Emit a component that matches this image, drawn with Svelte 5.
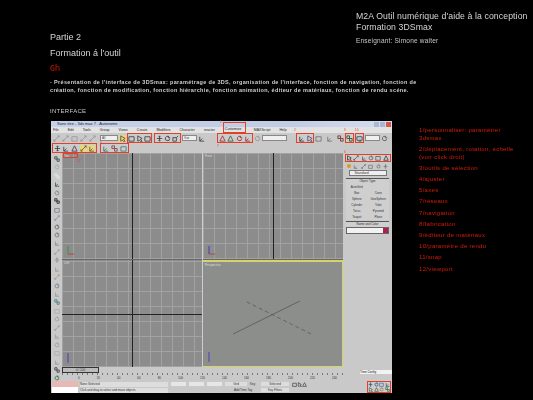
<script>
    const notes = [
        ["1/personnaliser: paramétrer", "3dsmax"],
        ["2/déplacement, rotation, échelle", "(voir click droit)"],
        ["3/outils de sélection"],
        ["4/ajuster"],
        ["5/axes"],
        ["7/réseaux"],
        ["7/navigation"],
        ["8/fabrication"],
        ["9/éditeur de matériaux"],
        ["10/paramètre de rendu"],
        ["11/snap"],
        ["12/viewport"]
    ];

    const paths = {
        link: "M1 7 7 1M5 1h2v2M1 5v2h2",
        arrow: "M2 1v6l2-1 2 2 1-1-2-2 2-1z",
        box: "M1 2h6v5H1z",
        move: "M4 1v6M1 4h6M3 2l1-1 1 1M3 6l1 1 1-1",
        rot: "M6.500 4a2.500 2.500 0 1 1-1-2M5 1v2h2",
        scale: "M1 7V3h4v4zM5 3l2-2",
        axis: "M2 7V2M2 7h5M2 7l3-3",
        tri: "M4 1 7 7H1z",
        mat: "M1 1h3v3H1zM4 4h3v3H4z",
        rend: "M1 2h6v4H1zM3 7h3"
    };

    const panelRows = [
        ["AutoGrid", ""],
        ["Box", "Cone"],
        ["Sphere", "GeoSphere"],
        ["Cylinder", "Tube"],
        ["Torus", "Pyramid"],
        ["Teapot", "Plane"]
    ];
    const menus = ["File", "Edit", "Tools", "Group", "Views", "Create", "Modifiers", "Character", "reactor"];
    const ticks = Array.from({ length: 13 }, (_, i) => i * 20);

    // left command strip of the max window, shape and colour
    const sideIcons = [
        ["mat", "#2c3c3c"], ["rot", "#8fb0b0"], ["mat", "#e4eeee"], ["axis", "#3c4c4c"], ["rot", "#6c8080"],
        ["mat", "#111"], ["box", "#778"], ["link", "#889"], ["rot", "#4c5c5c"], ["rot", "#667"],
        ["axis", "#888"], ["link", "#999"], ["move", "#888"], ["axis", "#999"], ["link", "#999"],
        ["rot", "#678"], ["axis", "#999"], ["mat", "#3a7a7a"], ["box", "#aaa"], ["rot", "#999"],
        ["link", "#999"], ["axis", "#999"], ["rot", "#999"], ["box", "#aaa"], ["axis", "#999"],
        ["mat", "#333"], ["rot", "#2a6a3a"]
    ];

    // little red numbers beside the boxes, in window coordinates
    const marks = [
        { t: "1", x: 169, y: 0 },
        { t: "2", x: 243, y: 8 },
        { t: "9", x: 293, y: 8 },
        { t: "10", x: 304, y: 8 },
        { t: "5", x: 49, y: 20 },
        { t: "7", x: 166, y: 24 },
        { t: "12", x: 26, y: 39 },
        { t: "6", x: 293, y: 30 }
    ];
</script>

{#snippet icon(name, color = "#444")}
    <svg class="ic" viewBox="0 0 8 8" fill="none" stroke={color} stroke-width="1"><path d={paths[name]} /></svg>
{/snippet}

{#snippet viewport(kind, label)}
    <div class="vp {kind}">
        <span class="vlabel">{label}</span>
        {#if kind === "v-persp"}
            <svg class="ground" viewBox="0 0 141 107" fill="none">
                <path d="M30 74 99 40" stroke="#4c4c4c" stroke-width=".7" />
                <path d="M44 41 110 74" stroke="#4c4c4c" stroke-width=".7" stroke-dasharray="4 3" />
            </svg>
        {:else}
            <i class="cross-v"></i>
            {#if kind === "v-left"}<i class="cross-h"></i>{/if}
        {/if}
        <svg class="gizmo" viewBox="0 0 12 12" fill="none">
            {#if kind === "v-top"}
                <path d="M3 2v8" stroke="#3a9a4a" stroke-width="1.200" />
                <path d="M3 10h6" stroke="#b44" stroke-width="1" />
            {:else if kind === "v-front"}
                <path d="M3 2v8" stroke="#4848b8" stroke-width="1.200" />
                <path d="M3 10h6" stroke="#b44" stroke-width="1" />
            {:else}
                <path d="M3 1v10" stroke="#5050b0" stroke-width="1.200" />
                <path d="M3 11 7 8" stroke="#a77" stroke-width=".7" />
            {/if}
        </svg>
    </div>
{/snippet}

<div class="slide">
    <header class="top">
        <div class="part">
            <p>Partie 2</p>
            <p>Formation á l'outil</p>
            <p class="hours">6h</p>
        </div>
        <div class="course">
            <p>M2A Outil numérique d'aide à la conception</p>
            <p>Formation 3DSmax</p>
            <p class="teacher">Enseignant: Simone walter</p>
        </div>
    </header>

    <p class="desc">- Présentation de l'interface de 3DSmax: paramétrage de 3DS, organisation de l'interface, fonction de navigation, fonction de création, fonction de modification, fonction hiérarchie, fonction animation, éditeur de matériaux, fonction de rendu scéne.</p>
    <p class="heading">INTERFACE</p>

    <div class="content">
        <div class="max">
            <div class="titlebar">
                <span>Sans titre - 3ds max 7 - Autonome</span>
                <span class="winbtns"><i></i><i></i><i class="close"></i></span>
            </div>
            <div class="menubar">
                {#each menus as m}<span>{m}</span>{/each}
                <span class="menu-hl">Customize</span>
                <span>MAXScript</span>
                <span>Help</span>
            </div>

            <div class="tb tb1">
                <span class="ghost">{@render icon("link", "#999")}{@render icon("link", "#999")}{@render icon("box", "#999")}{@render icon("link", "#999")}{@render icon("link", "#999")}</span>
                <span class="drop w18">All</span>
                <span class="yellow">{@render icon("arrow", "#555")}</span>
                <span class="hl g25">{@render icon("box")}{@render icon("arrow")}{@render icon("box")}</span>
                <span class="hl g26">{@render icon("move")}{@render icon("rot")}{@render icon("scale")}</span>
                <span class="drop w15">Vue</span>
                {@render icon("axis")}
                <span class="hl g36">{@render icon("tri", "#a33")}{@render icon("tri", "#464")}{@render icon("rot", "#a33")}{@render icon("axis", "#a33")}</span>
                {@render icon("rot", "#999")}
                <span class="drop w25"></span>
                <span class="hl g18">{@render icon("axis")}{@render icon("arrow", "#557")}</span>
                {@render icon("box", "#777")}<span class="pad"></span>{@render icon("axis", "#777")}<span class="pad"></span>{@render icon("mat", "#733")}
                <span class="hl one">{@render icon("mat", "#353")}</span>
                <span class="hl one">{@render icon("rend", "#355")}</span>
                <span class="drop w15"></span>
                {@render icon("rot", "#566")}
            </div>

            <div class="tb tb2">
                <span class="hl g45">
                    {@render icon("move")}{@render icon("axis")}{@render icon("tri")}
                    <span class="yellow">{@render icon("link", "#755")}</span><span class="yellow">{@render icon("axis", "#755")}</span>
                </span>
                <span class="hl g29">{@render icon("axis", "#477")}{@render icon("mat", "#844")}{@render icon("box", "#577")}</span>
            </div>

            <div class="main">
                <div class="leftcol">
                    <aside class="side">
                        {#each sideIcons as s}{@render icon(s[0], s[1])}{/each}
                    </aside>
                    <div class="centre">
                        <div class="views">
                            <span class="vp-box"></span>
                            {@render viewport("v-top", "Top")}
                            {@render viewport("v-front", "Front")}
                            {@render viewport("v-left", "Left")}
                            {@render viewport("v-persp", "Perspective")}
                        </div>
                        <div class="slider"><span class="thumb">0 / 100</span></div>
                        <div class="ruler">
                            {#each ticks as t}<span>{t}</span>{/each}
                        </div>
                    </div>
                </div>

                <aside class="panel">
                    <div class="hl tabs">
                        {@render icon("arrow", "#333")}{@render icon("link", "#555")}{@render icon("axis", "#555")}{@render icon("rot", "#555")}{@render icon("box", "#555")}{@render icon("tri", "#333")}
                    </div>
                    <div class="sub">
                        <i class="dot"></i>
                        {@render icon("axis", "#666")}{@render icon("link", "#666")}{@render icon("box", "#666")}{@render icon("rot", "#666")}{@render icon("move", "#666")}
                    </div>
                    <div class="std">Standard</div>
                    <div class="rollout">
                        <b>Object Type</b>
                        {#each panelRows as row}
                            <div class="prow"><span>{row[0]}</span><span>{row[1]}</span></div>
                        {/each}
                    </div>
                    <div class="rollout name">
                        <b>Name and Color</b>
                        <div class="field"><i></i></div>
                    </div>
                    <div class="spacer"></div>
                    <div class="timecfg">Time Config</div>
                </aside>
            </div>

            <div class="bottom">
                <div class="listener"><i></i><i></i></div>
                <div class="status">
                    <div class="st1">
                        <span class="line">None Selected</span>
                        <span class="fld"></span><span class="fld"></span><span class="fld"></span>
                        <span class="btn">Grid</span>
                        <span class="key">Key</span>
                        <span class="btn w">Selected</span>
                        <span class="play">{@render icon("box", "#333")}{@render icon("arrow", "#333")}{@render icon("tri", "#333")}</span>
                    </div>
                    <div class="st2">
                        <span class="line">Click and drag to select and move objects</span>
                        <span class="addt">Add Time Tag</span>
                        <span class="btn w">Key Filters</span>
                    </div>
                </div>
                <div class="hl navi">
                    {@render icon("move", "#345")}{@render icon("rot", "#345")}{@render icon("box", "#36a")}{@render icon("axis", "#345")}
                    {@render icon("arrow", "#454")}{@render icon("tri", "#454")}{@render icon("rot", "#a63")}{@render icon("mat", "#454")}
                </div>
            </div>

            {#each marks as m}
                <span class="mark" style="left:{m.x}px;top:{m.y}px">{m.t}</span>
            {/each}
        </div>

        <ul class="notes">
            {#each notes as n}
                <li>{#each n as line}<span>{line}</span>{/each}</li>
            {/each}
        </ul>
    </div>
</div>

<style>
    :global(body) {
        margin: 0;
        background: #000;
    }

    p {
        margin: 0;
    }

    .slide {
        width: 533px;
        height: 400px;
        box-sizing: border-box;
        padding: 1px 0 0 50px;
        background: #000;
        color: #d6d6d6;
        font-family: "Liberation Sans", Arial, sans-serif;
        overflow: hidden;
    }

    .top {
        display: flex;
        height: 77px;
    }

    .part {
        width: 306px;
        flex: none;
        padding-top: 29px;
        font-size: 9px;
        line-height: 15.500px;
        filter: blur(.3px);
    }

    .hours {
        color: #c01808;
    }

    .course {
        padding-top: 10px;
        font-size: 8.700px;
        line-height: 11px;
        letter-spacing: .1px;
        filter: blur(.3px);
        white-space: nowrap;
    }

    .teacher {
        margin-top: 2px;
        font-size: 6.500px;
        letter-spacing: .2px;
        color: #c8c8c8;
    }

    .desc {
        width: 372px;
        font-size: 5.500px;
        font-weight: bold;
        line-height: 8px;
        letter-spacing: .33px;
        color: #cfcfcf;
        filter: blur(.3px);
    }

    .heading {
        margin-top: 13px;
        height: 14px;
        font-size: 6px;
        line-height: 8px;
        letter-spacing: .3px;
        color: #c8c8c8;
        filter: blur(.2px);
    }

    .content {
        display: flex;
        align-items: flex-start;
        margin-left: 1px;
    }

    .max {
        position: relative;
        width: 341px;
        height: 272px;
        flex: none;
        display: flex;
        flex-direction: column;
        background: #c9c9c9;
        color: #333;
        font-size: 3.500px;
        filter: blur(.55px);
    }

    .mark {
        position: absolute;
        font-size: 3px;
        line-height: 3px;
        color: #e2402a;
    }

    .titlebar {
        height: 6px;
        display: flex;
        justify-content: space-between;
        align-items: center;
        padding: 0 1px 0 6px;
        background: linear-gradient(90deg, #c6d2ea, #c0cbe4 70%, #d6def0);
        color: #223;
        line-height: 6px;
        font-size: 4px;
    }

    .winbtns {
        display: flex;
        gap: 1px;
    }

    .winbtns i {
        width: 5px;
        height: 5px;
        background: #a9b6d6;
    }

    .winbtns .close {
        background: #d65a4a;
    }

    .menubar {
        position: relative;
        height: 6px;
        display: flex;
        gap: 9px;
        padding-left: 2px;
        background: #e2e2e2;
        color: #222;
        line-height: 6px;
        white-space: nowrap;
    }

    .menu-hl {
        outline: 1px solid #e0432a;
        height: 9px;
        margin-top: -4px;
        padding: 3px 1px 0;
        box-sizing: border-box;
        width: 21px;
    }

    .tb {
        display: flex;
        align-items: center;
        background: #c9c9c9;
    }

    .tb1 {
        height: 10px;
        padding-left: 2px;
        gap: 1px;
    }

    .tb2 {
        height: 10px;
        padding-left: 1px;
        gap: 3px;
    }

    .ghost {
        display: flex;
        gap: 2px;
        width: 46px;
    }

    .ic {
        width: 7px;
        height: 7px;
        flex: none;
    }

    .pad {
        width: 2px;
    }

    .hl {
        box-sizing: border-box;
        display: flex;
        align-items: center;
        justify-content: space-around;
        border: 1px solid #e2402a;
        background: #ccc;
    }

    .tb .hl {
        height: 10px;
    }

    .g25 { width: 25px; }
    .g26 { width: 27px; margin-left: 1px; }
    .g36 { width: 36px; margin-left: 11px; }
    .g18 { width: 18px; margin-left: 8px; }
    .g45 { width: 45px; }
    .g29 { width: 29px; }
    .one { width: 9px; }

    .yellow {
        display: flex;
        background: #e9d774;
    }

    .drop {
        box-sizing: border-box;
        height: 6px;
        flex: none;
        padding-left: 1px;
        background: #efefef;
        border: 1px solid #888;
        line-height: 4px;
        font-size: 3px;
    }

    .w18 { width: 18px; }
    .w15 { width: 15px; }
    .w25 { width: 25px; }

    .main {
        display: flex;
        height: 228px;
    }

    .leftcol {
        width: 292px;
        display: flex;
    }

    .side {
        width: 11px;
        flex: none;
        padding-top: 3px;
        display: flex;
        flex-direction: column;
        align-items: center;
        gap: 2.450px;
        background: #c9c9c9;
    }

    .side .ic {
        width: 6px;
        height: 6px;
    }

    .centre {
        width: 281px;
    }

    .views {
        position: relative;
        height: 214px;
        display: grid;
        grid-template-columns: 1fr 1fr;
        grid-template-rows: 1fr 1fr;
        background: #cfcfcf;
        column-gap: 1px;
    }

    .vp-box {
        position: absolute;
        z-index: 2;
        left: 1px;
        top: 0;
        width: 15px;
        height: 5px;
        box-sizing: border-box;
        border: 1px solid #e2402a;
    }

    .vp {
        position: relative;
        box-sizing: border-box;
        background-color: #8c8c8c;
        background-image:
            repeating-linear-gradient(90deg, #a2a2a2 0 1px, transparent 1px 11px),
            repeating-linear-gradient(0deg, #a2a2a2 0 1px, transparent 1px 15px);
    }

    .vp.v-top,
    .vp.v-front {
        border-bottom: 1px solid #666;
    }

    .vp.v-persp {
        border: 1px solid #d6d468;
        border-width: 2px 1px 1px 0;
        background-image: none;
        background-color: #8c8e8c;
    }

    .vlabel {
        position: absolute;
        left: 2px;
        top: 1px;
        font-size: 3px;
        color: #ddd;
    }

    .cross-v,
    .cross-h {
        position: absolute;
        background: #222;
    }

    .cross-v {
        left: 50%;
        top: 0;
        bottom: 0;
        width: 1px;
    }

    .cross-h {
        top: 50%;
        left: 0;
        right: 0;
        height: 1px;
    }

    .ground {
        position: absolute;
        inset: 0;
        width: 100%;
        height: 100%;
    }

    .gizmo {
        position: absolute;
        left: 3px;
        bottom: 3px;
        width: 12px;
        height: 12px;
    }

    .slider {
        height: 6px;
        background: #c9c9c9;
    }

    .thumb {
        display: block;
        box-sizing: border-box;
        width: 37px;
        height: 6px;
        border: 1px solid #333;
        background: #bbb;
        text-align: center;
        line-height: 4px;
        font-size: 3px;
    }

    .ruler {
        height: 8px;
        display: flex;
        justify-content: space-between;
        padding: 0 6px 0 16px;
        background: repeating-linear-gradient(90deg, #777 0 1px, transparent 1px 5px) 0 0 / 100% 2px no-repeat #c9c9c9;
        line-height: 11px;
        font-size: 3px;
    }

    .panel {
        width: 49px;
        display: flex;
        flex-direction: column;
        align-items: center;
        background: #c9c9c9;
    }

    .tabs {
        width: 46px;
        height: 8px;
        margin-top: 1px;
    }

    .sub {
        display: flex;
        align-items: center;
        justify-content: space-around;
        width: 44px;
        height: 8px;
    }

    .sub .ic {
        width: 5px;
        height: 5px;
    }

    .tabs .ic {
        width: 6px;
        height: 6px;
    }

    .dot {
        width: 4px;
        height: 4px;
        border-radius: 50%;
        background: #dc9a20;
    }

    .std {
        box-sizing: border-box;
        width: 38px;
        height: 6px;
        padding-left: 5px;
        border: 1px solid #777;
        background: #eee;
        line-height: 4px;
        font-size: 3.500px;
    }

    .rollout {
        box-sizing: border-box;
        width: 43px;
        margin-top: 2px;
        border-top: 1px solid #555;
        background: #cfcfcf;
    }

    .rollout b {
        display: block;
        height: 5px;
        text-align: center;
        line-height: 4px;
        font-weight: normal;
        font-size: 3px;
    }

    .prow {
        display: grid;
        grid-template-columns: 1fr 1fr;
        height: 6px;
        text-align: center;
        line-height: 6px;
        font-size: 3px;
        white-space: nowrap;
    }

    .name {
        margin-top: 1px;
    }

    .field {
        display: flex;
        justify-content: flex-end;
        height: 7px;
        background: #f2f2f2;
        border: 1px solid #666;
        box-sizing: border-box;
    }

    .field i {
        width: 5px;
        background: #a8224c;
    }

    .spacer {
        flex: 1;
    }

    .timecfg {
        margin-bottom: 7px;
        align-self: flex-end;
        width: 32px;
        height: 4px;
        background: #f2f2f2;
        color: #111;
        line-height: 4px;
        font-size: 3px;
        white-space: nowrap;
    }

    .bottom {
        display: flex;
        height: 12px;
        background: #c9c9c9;
    }

    .listener {
        width: 26px;
        margin-left: 1px;
        flex: none;
    }

    .listener i {
        display: block;
        height: 6px;
        background: #e8b8b4;
    }

    .listener i + i {
        background: #fff;
    }

    .status {
        width: 289px;
        flex: none;
        padding-left: 2px;
        box-sizing: border-box;
    }

    .st1,
    .st2 {
        display: flex;
        align-items: center;
        gap: 3px;
        height: 6px;
        white-space: nowrap;
        font-size: 3px;
    }

    .line {
        width: 88px;
        flex: none;
        background: #ddd;
        line-height: 5px;
    }

    .fld {
        width: 15px;
        height: 4px;
        background: #e6e6e6;
    }

    .btn {
        width: 22px;
        background: #ddd;
        text-align: center;
    }

    .btn.w {
        width: 28px;
    }

    .key {
        width: 8px;
    }

    .play {
        display: flex;
    }

    .play .ic {
        width: 5px;
        height: 5px;
    }

    .addt {
        width: 24px;
        margin-left: 63px;
    }

    .navi {
        width: 24px;
        height: 12px;
        flex-wrap: wrap;
    }

    .navi .ic {
        width: 5px;
        height: 5px;
    }

    .notes {
        margin: 6px 0 0 27px;
        padding: 0;
        list-style: none;
        color: #d81c08;
        font-size: 6px;
        letter-spacing: .3px;
        filter: blur(.25px);
    }

    .notes li {
        margin-bottom: 3.500px;
        line-height: 7.700px;
    }

    .notes span {
        display: block;
        white-space: nowrap;
    }
</style>
